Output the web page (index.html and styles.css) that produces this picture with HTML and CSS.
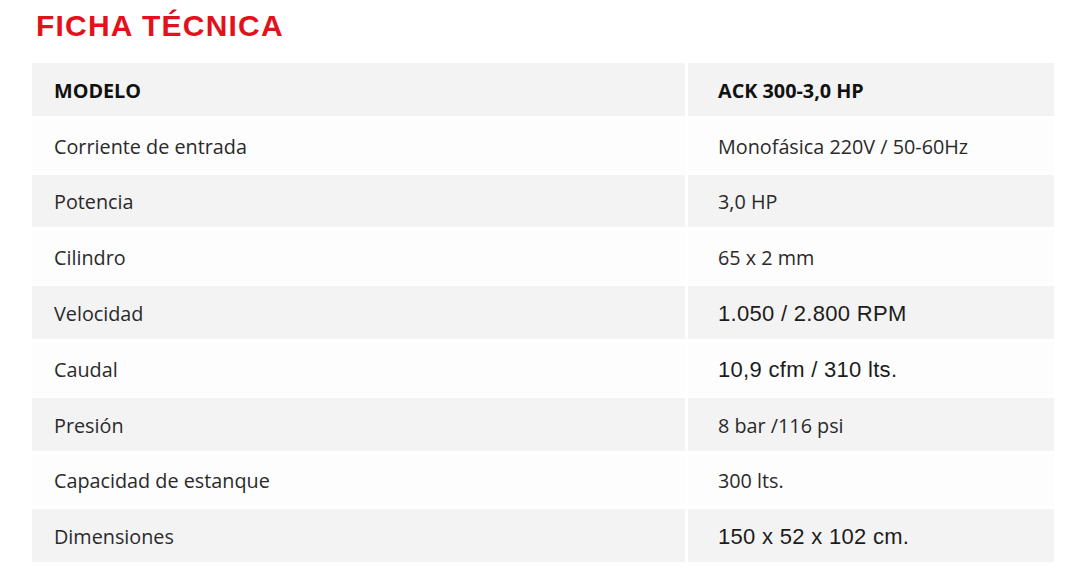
FILE: index.html
```html
<!DOCTYPE html>
<html lang="es">
<head>
<meta charset="utf-8">
<title>Ficha técnica</title>
<link rel="stylesheet" href="styles.css">
</head>
<body>
<main class="page">
  <h1 class="title">FICHA TÉCNICA</h1>
  <div class="spec">
    <div class="cell label head">MODELO</div>
    <div class="cell value head">ACK 300-3,0 HP</div>

    <div class="cell label alt">Corriente de entrada</div>
    <div class="cell value alt">Monofásica 220V / 50-60Hz</div>

    <div class="cell label">Potencia</div>
    <div class="cell value">3,0 HP</div>

    <div class="cell label alt">Cilindro</div>
    <div class="cell value alt">65 x 2 mm</div>

    <div class="cell label">Velocidad</div>
    <div class="cell value arial">1.050 / 2.800 RPM</div>

    <div class="cell label alt">Caudal</div>
    <div class="cell value alt arial">10,9 cfm / 310 lts.</div>

    <div class="cell label">Presión</div>
    <div class="cell value">8 bar /116 psi</div>

    <div class="cell label alt">Capacidad de estanque</div>
    <div class="cell value alt">300 lts.</div>

    <div class="cell label">Dimensiones</div>
    <div class="cell value arial">150 x 52 x 102 cm.</div>
  </div>
</main>
</body>
</html>
```
FILE: styles.css
```css
html, body {
  margin: 0;
  padding: 0;
  background: #ffffff;
}

.page {
  width: 1080px;
  height: 580px;
  padding: 0 0 0 32px;
  box-sizing: border-box;
  font-family: "Open Sans", "Liberation Sans", sans-serif;
  color: #2a2a2a;
}

.title {
  margin: 0;
  padding: 9px 0 0 4px;
  height: 53px;
  box-sizing: border-box;
  font-family: "Liberation Sans", Arial, sans-serif;
  font-weight: 700;
  font-size: 30px;
  line-height: 34px;
  color: #e3111b;
  letter-spacing: 1.2px;
}

.spec {
  display: grid;
  grid-template-columns: 653px 366px;
  grid-auto-rows: 52.8px;
  column-gap: 3px;
  row-gap: 3px;
  margin-top: 10px;
}

.cell {
  display: flex;
  align-items: center;
  padding-top: 3px;
  box-sizing: border-box;
  background: #f3f3f3;
  font-size: 19.8px;
  line-height: 26px;
}

.cell.alt {
  background: #fdfdfd;
}

.label {
  padding-left: 22px;
}

.value {
  padding-left: 30px;
}

.head {
  font-weight: 700;
  color: #111111;
}

.arial {
  font-family: "Liberation Sans", Arial, sans-serif;
  font-size: 22px;
  letter-spacing: 0.3px;
  color: #1c1c1c;
}
```
